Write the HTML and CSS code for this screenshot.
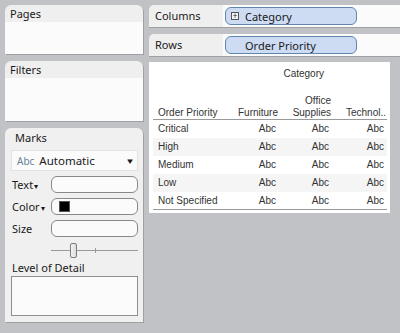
FILE: index.html
```html
<!DOCTYPE html>
<html lang="en">
<head>
    <meta charset="UTF-8">
    <title>Worksheet</title>
    <link rel="stylesheet" href="styles.css">
</head>
<body>
    <div class="workspace">
        <div class="side">
            <div class="card pages">
                <div class="card-title">Pages</div>
                <div class="card-body"></div>
            </div>
            <div class="card filters">
                <div class="card-title">Filters</div>
                <div class="card-body"></div>
            </div>
            <div class="card marks">
                <div class="marks-title">Marks</div>
                <div class="mark-type">
                    <span class="abc">Abc</span>
                    <span class="mark-name">Automatic</span>
                    <span class="caret">&#9660;</span>
                </div>
                <div class="mark-row">
                    <span class="mark-label">Text<span class="small-caret">&#9662;</span></span>
                    <div class="mark-field"></div>
                </div>
                <div class="mark-row">
                    <span class="mark-label">Color<span class="small-caret">&#9662;</span></span>
                    <div class="mark-field"><span class="swatch"></span></div>
                </div>
                <div class="mark-row">
                    <span class="mark-label">Size</span>
                    <div class="mark-field"></div>
                </div>
                <div class="slider">
                    <div class="slider-track"></div>
                    <div class="slider-thumb"></div>
                    <div class="slider-tick"></div>
                </div>
                <div class="detail-label">Level of Detail</div>
                <div class="detail-box"></div>
            </div>
        </div>

        <div class="main">
            <div class="shelf">
                <div class="shelf-label">Columns</div>
                <div class="shelf-body">
                    <div class="pill"><span class="plus">+</span>Category</div>
                </div>
            </div>
            <div class="shelf">
                <div class="shelf-label">Rows</div>
                <div class="shelf-body">
                    <div class="pill"><span class="plus hidden"></span>Order Priority</div>
                </div>
            </div>

            <div class="view">
                <div class="view-head">Category</div>
                <table class="crosstab">
                    <colgroup>
                        <col class="c-dim">
                        <col class="c-furn">
                        <col class="c-office">
                        <col class="c-tech">
                    </colgroup>
                    <thead>
                        <tr>
                            <th class="left">Order Priority</th>
                            <th>Furniture</th>
                            <th>Office<br>Supplies</th>
                            <th>Technol..</th>
                        </tr>
                    </thead>
                    <tbody>
                        <tr><td class="left">Critical</td><td>Abc</td><td>Abc</td><td>Abc</td></tr>
                        <tr class="band"><td class="left">High</td><td>Abc</td><td>Abc</td><td>Abc</td></tr>
                        <tr><td class="left">Medium</td><td>Abc</td><td>Abc</td><td>Abc</td></tr>
                        <tr class="band"><td class="left">Low</td><td>Abc</td><td>Abc</td><td>Abc</td></tr>
                        <tr><td class="left">Not Specified</td><td>Abc</td><td>Abc</td><td>Abc</td></tr>
                    </tbody>
                </table>
            </div>
        </div>
    </div>
</body>
</html>
```

FILE: styles.css
```css
* {
    margin: 0;
    padding: 0;
    box-sizing: border-box;
}

body {
    background: #c1c2c5;
    font-family: 'Noto Sans', 'Open Sans', sans-serif;
    font-size: 11px;
    color: #1a1a1a;
    overflow: hidden;
}

.workspace {
    display: flex;
    align-items: flex-start;
    gap: 6px;
    padding: 5px 0 0 5px;
    height: 333px;
}

/* left side cards */
.side {
    width: 138px;
    flex-shrink: 0;
    display: flex;
    flex-direction: column;
    gap: 7px;
}

.card {
    border-radius: 6px 6px 0 0;
    box-shadow: 1px 1px 0 #9fa0a3;
    overflow: hidden;
}

.card-title {
    background: #efefef;
    height: 17px;
    padding: 1px 0 0 5px;
    line-height: 15px;
}

.card-body {
    background: #fbfbfb;
}

.pages .card-body {
    height: 32px;
}

.filters .card-body {
    height: 43px;
}

.marks {
    background: #f0f0f0;
    height: 194px;
    flex-shrink: 0;
    padding: 0 5px 0 6px;
}

.marks-title {
    height: 22px;
    line-height: 18px;
    padding-left: 4px;
    padding-top: 1px;
}

.mark-type {
    display: flex;
    align-items: center;
    height: 21px;
    background: #fbfbfb;
    border: 1px solid #e2e2e2;
    padding: 0 3px 0 5px;
    margin-bottom: 5px;
}

.abc {
    color: #6a7f9b;
    font-size: 10px;
    margin-right: 5px;
}

.mark-name {
    font-size: 11.5px;
    flex: 1;
}

.caret {
    font-size: 8px;
    transform: scaleX(1.2);
}

.mark-row {
    display: flex;
    align-items: center;
    height: 17px;
    margin-bottom: 5px;
}

.mark-label {
    width: 40px;
    padding-left: 1px;
}

.small-caret {
    font-size: 8px;
    margin-left: 1px;
}

.mark-field {
    flex: 1;
    height: 17px;
    background: #fbfbfb;
    border: 1px solid #888;
    border-radius: 6px;
    display: flex;
    align-items: center;
    padding-left: 7px;
}

.swatch {
    width: 11px;
    height: 11px;
    background: #000;
    border: 1px solid #555;
}

.slider {
    position: relative;
    height: 18px;
    margin-left: 40px;
}

.slider-track {
    position: absolute;
    left: 0;
    right: 0;
    top: 8px;
    height: 1px;
    background: #9a9a9a;
}

.slider-thumb {
    position: absolute;
    left: 19px;
    top: 1px;
    width: 7px;
    height: 15px;
    border: 1px solid #7d7d7d;
    border-radius: 2px;
    background: linear-gradient(to right, #f4f4f4, #dcdcdc);
}

.slider-tick {
    position: absolute;
    left: 44px;
    top: 6px;
    width: 1px;
    height: 5px;
    background: #9a9a9a;
}

.detail-label {
    padding-left: 1px;
    height: 16px;
    line-height: 16px;
}

.detail-box {
    height: 40px;
    background: #fbfbfb;
    border: 1px solid #8e8e8e;
}

/* right side */
.main {
    flex: 1;
    display: flex;
    flex-direction: column;
    gap: 7px;
}

.shelf {
    display: flex;
    height: 22px;
    box-shadow: 0 1px 0 #9fa0a3;
    border-radius: 5px 0 0 0;
    overflow: hidden;
}

.shelf-label {
    width: 74px;
    background: #efefef;
    padding-left: 6px;
    line-height: 22px;
}

.shelf-body {
    flex: 1;
    background: #fbfbfb;
    padding: 2px 0 0 2px;
}

.pill {
    width: 132px;
    height: 18px;
    background: #cddcf3;
    border: 1px solid #5f86ad;
    border-radius: 6px;
    display: flex;
    align-items: center;
    padding-left: 5px;
}

.plus {
    width: 8px;
    height: 8px;
    border: 1px solid #555;
    background: #f4f4f4;
    font-size: 8px;
    line-height: 6px;
    text-align: center;
    margin-right: 6px;
}

.plus.hidden {
    border: none;
    background: none;
}

.view {
    width: 241px;
    height: 151px;
    margin-top: -1px;
    background: #fff;
    padding: 5px 3px 0 4px;
    font-family: 'Liberation Sans', Arial, sans-serif;
    font-size: 10px;
    color: #333;
}

.view-head {
    text-align: right;
    padding-right: 63px;
    height: 28px;
    line-height: 14px;
}

.crosstab {
    width: 234px;
    table-layout: fixed;
    border-collapse: collapse;
}

.c-dim { width: 78px; }
.c-furn { width: 48px; }
.c-office { width: 53px; }
.c-tech { width: 55px; }

.crosstab th {
    font-weight: normal;
    text-align: right;
    vertical-align: bottom;
    line-height: 12px;
    padding: 0 1px 0 0;
    border-bottom: 1px solid #999;
    white-space: nowrap;
}

.crosstab td {
    text-align: right;
    height: 18px;
    padding: 0 3px 0 0;
}

.crosstab .left {
    text-align: left;
    padding-left: 5px;
}

.crosstab tr.band td {
    background: #f5f5f5;
}

.crosstab tbody tr:last-child td {
    border-bottom: 1px solid #999;
}
```
